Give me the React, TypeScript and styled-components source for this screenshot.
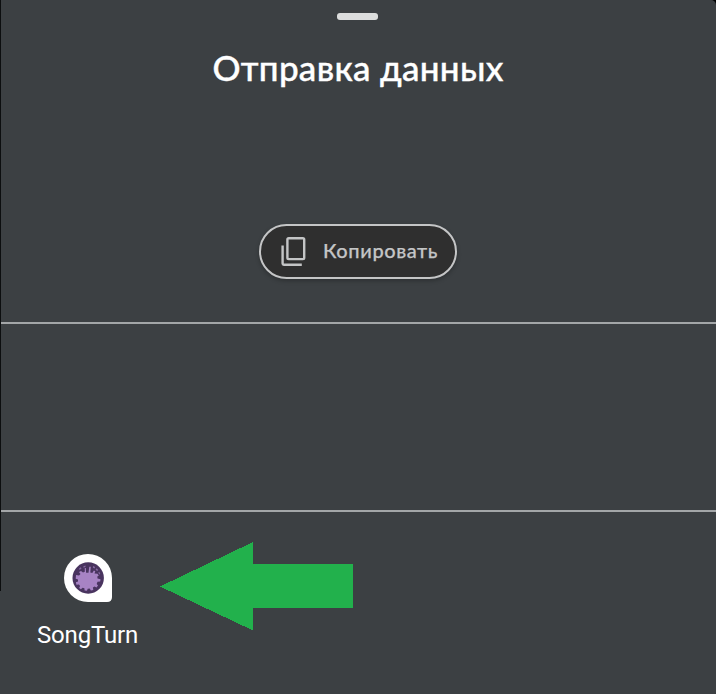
import React from "react";
import styled, { createGlobalStyle } from "styled-components";

const GlobalStyle = createGlobalStyle`
  * { box-sizing: border-box; }
  body { margin: 0; background: #000; overflow: hidden; }
`;

const Sheet = styled.main`
  width: 716px;
  height: 694px;
  display: flex;
  flex-direction: column;
  background: linear-gradient(#0c0e0f, #0c0e0f) 0 0 / 1px 591px no-repeat, #3c4043;
  border-top-right-radius: 5px;
  color: #fff;
`;

const Header = styled.header`
  height: 322px;
  display: flex;
  flex-direction: column;
  align-items: center;
  padding-top: 13px;
`;

const Handle = styled.div`
  width: 41px;
  height: 7px;
  margin-right: 1px;
  border-radius: 3px;
  background: #dcdddd;
`;

const Title = styled.h1`
  margin: 17px 0 0;
  height: 60px;
  font: 500 35px/60px Lato, sans-serif;
  letter-spacing: 0.3px;
  -webkit-text-stroke: 0.4px #fff;
  white-space: nowrap;
`;

const CopyButton = styled.button`
  width: 198px;
  height: 55px;
  margin-top: 127px;
  padding: 0 0 0 20px;
  display: flex;
  align-items: center;
  gap: 17px;
  border: 2px solid #c4c5c6;
  border-radius: 28px;
  background: #2f2f2f;
  box-shadow: 0 2px 4px rgba(0, 0, 0, 0.25);
  color: #c4c5c6;
  white-space: nowrap;
`;

const CopyLabel = styled.span`
  padding-bottom: 4px;
  font: 500 20px/24px Lato, sans-serif;
  letter-spacing: 0.6px;
  -webkit-text-stroke: 0.25px #c4c5c6;
`;

const Contacts = styled.section`
  height: 190px;
  margin-left: 1px;
  border: solid #a3a6a8;
  border-width: 2px 0;
`;

const Apps = styled.section`
  display: flex;
  padding: 30px 0 0 26px;
`;

const AppItem = styled.div`
  width: 123px;
  display: flex;
  flex-direction: column;
  align-items: center;
  padding-top: 12px;
`;

const AppName = styled.span`
  margin-top: 17px;
  font: 400 24px/32px Roboto, sans-serif;
  letter-spacing: -0.2px;
`;

const Arrow = styled.svg`
  margin-left: 11px;
  display: block;
`;

function CopyIcon() {
  return (
    <svg width="25" height="29" viewBox="0 0 25 29" fill="none" stroke="currentColor" strokeWidth="2.4">
      <rect x="6.4" y="1.3" width="16.8" height="20.8" rx="1.3" />
      <path d="M1.6 8.4v18.2q0 1.2 1.2 1.2h18" />
    </svg>
  );
}

function SongTurnIcon() {
  return (
    <svg width="48" height="48" viewBox="0 0 48 48">
      <path d="M24 0A24 24 0 0 1 48 24V43Q48 48 43 48H24A24 24 0 0 1 24 0Z" fill="#fff" />
      <circle cx="24.2" cy="24" r="15.7" fill="#49345f" />
      <path
        fill="#a783c4"
        d="M12 21l3 .5 1.5-1.5-1.5-2 2-1 2 1.5 1.8-.7V14l1 .1.3 4.6h2.4l.8-6h1.5l-.5 5.8 2 .5 1.6-2.5 1.4.8-.8 2.2 3 .3 1.3 1.6-1.5 1.1.2 2 3 .7-.3 2.4-2.7.2-.8 2.2 1.3 1.5-1.5 1.9-2-1-1.6 1.2.4 2.3-2.4.7-1.2-2-2 .1-.7 2.1-2.4-.2-.2-2.3-1.8-.5-1.7 1.5-1.8-1.4 1-2-1.2-1.5-2.5.3-.5-2.4 2.1-.9v-2l-2.3-.7z"
      />
      <path
        fill="#876aa2"
        d="M15 14.8l1.6-1.5 1 1-1.8 1.6zM19.2 12.4l2.2-.8.2 1.2-1.9.9zM29 12l2.2.9-.6 1.6-1.7-.7zM32.5 14.3l1.8 1.6-1.1 1.1-1.6-1.3zM34.3 18.4l1-.6 1 2.3-1.1.5z"
      />
    </svg>
  );
}

export default function App() {
  return (
    <>
      <GlobalStyle />
      <Sheet>
        <Header>
          <Handle />
          <Title>Отправка данных</Title>
          <CopyButton>
            <CopyIcon />
            <CopyLabel>Копировать</CopyLabel>
          </CopyButton>
        </Header>
        <Contacts />
        <Apps>
          <AppItem>
            <SongTurnIcon />
            <AppName>SongTurn</AppName>
          </AppItem>
          <Arrow width="193" height="89" viewBox="0 0 193 89" shapeRendering="crispEdges">
            <path d="M0 44.5L93 0V22H193V66H93V88.5Z" fill="#22b14c" />
          </Arrow>
        </Apps>
      </Sheet>
    </>
  );
}
